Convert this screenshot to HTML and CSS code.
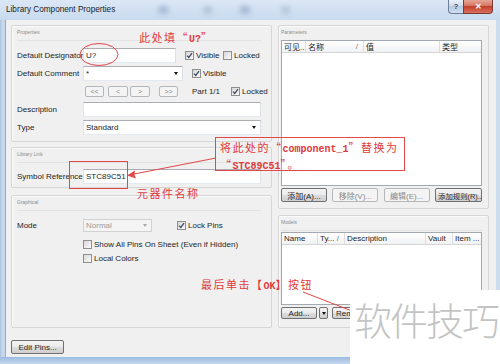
FILE: index.html
```html
<!DOCTYPE html>
<html lang="en">
<head>
  <meta charset="UTF-8">
  <title>Library Component Properties</title>
  <link rel="stylesheet" href="styles.css">
</head>
<body>
<div class="window">
  <div class="titlebar">
    <span class="title">Library Component Properties</span>
    <span class="title-blur"></span>
    <div class="caption">
      <span class="cap-btn cap-help">?</span>
      <span class="cap-btn cap-close">✕</span>
    </div>
  </div>

  <div class="client">
    <div class="columns">
      <div class="col col-left">
        <div class="group g-props">
          <div class="group-title">Properties</div>
          <div class="rows">
            <div class="row">
              <span class="lbl">Default Designator</span>
              <span class="edit w-short">U?</span>
              <span class="chk-cell"><span class="chk on"><svg viewBox="0 0 7 7"><path d="M1 3.6 L2.8 5.4 L6 1.2"/></svg></span>Visible</span>
              <span class="chk-cell"><span class="chk"></span>Locked</span>
            </div>
            <div class="row">
              <span class="lbl">Default Comment</span>
              <span class="edit combo w-short">*<span class="arrow"></span></span>
              <span class="chk-cell"><span class="chk on"><svg viewBox="0 0 7 7"><path d="M1 3.6 L2.8 5.4 L6 1.2"/></svg></span>Visible</span>
            </div>
            <div class="row">
              <span class="lbl"></span>
              <div class="nav">
                <span class="btn disabled nav-a">&lt;&lt;</span>
                <span class="btn disabled nav-b">&lt;</span>
                <span class="btn disabled nav-c">&gt;</span>
                <span class="btn disabled nav-d">&gt;&gt;</span>
              </div>
              <span class="part">Part 1/1</span>
              <span class="chk-cell"><span class="chk on"><svg viewBox="0 0 7 7"><path d="M1 3.6 L2.8 5.4 L6 1.2"/></svg></span>Locked</span>
            </div>
            <div class="row">
              <span class="lbl">Description</span>
              <span class="edit grow"></span>
            </div>
            <div class="row">
              <span class="lbl">Type</span>
              <span class="edit combo grow">Standard<span class="arrow"></span></span>
            </div>
          </div>
        </div>

        <div class="group g-link">
          <div class="group-title">Library Link</div>
          <div class="rows">
            <div class="row">
              <span class="lbl">Symbol Reference</span>
              <span class="edit grow">STC89C51</span>
            </div>
          </div>
        </div>

        <div class="group g-graph">
          <div class="group-title">Graphical</div>
          <div class="rows">
            <div class="row">
              <span class="lbl">Mode</span>
              <span class="edit combo off w-mode">Normal<span class="arrow"></span></span>
              <span class="chk-cell pins"><span class="chk on"><svg viewBox="0 0 7 7"><path d="M1 3.6 L2.8 5.4 L6 1.2"/></svg></span>Lock Pins</span>
            </div>
            <div class="row small first">
              <span class="lbl"></span>
              <span class="chk-cell"><span class="chk"></span>Show All Pins On Sheet (Even if Hidden)</span>
            </div>
            <div class="row small">
              <span class="lbl"></span>
              <span class="chk-cell"><span class="chk"></span>Local Colors</span>
            </div>
          </div>
        </div>
      </div>

      <div class="col col-right">
        <div class="group g-params">
          <div class="group-title">Parameters</div>
          <div class="table t-params">
            <div class="thead">
              <span class="th p-vis">可见...</span>
              <span class="th p-name">名称<span>/</span></span>
              <span class="th p-val">值</span>
              <span class="th p-type">类型</span>
            </div>
            <div class="tbody"></div>
          </div>
          <div class="btn-row">
            <span class="btn">添加(A)...</span>
            <span class="btn disabled">移除(V)...</span>
            <span class="btn disabled">编辑(E)...</span>
            <span class="btn b-rule">添加规则(R)..</span>
          </div>
        </div>

        <div class="group g-models">
          <div class="group-title">Models</div>
          <div class="table t-models">
            <div class="thead">
              <span class="th m-name">Name</span>
              <span class="th m-type">Ty...<span>/</span></span>
              <span class="th m-desc">Description</span>
              <span class="th m-vault">Vault</span>
              <span class="th m-item">Item ...</span>
            </div>
            <div class="tbody"></div>
          </div>
          <div class="btn-row models-btns">
            <span class="btn b-add">Add...</span>
            <span class="btn b-drop"><span class="arrow"></span></span>
            <span class="btn b-remove">Remove...</span>
          </div>
        </div>
      </div>
    </div>

    <div class="footer">
      <span class="btn b-pins">Edit Pins...</span>
    </div>
  </div>
  <div class="frame-bottom"></div>

  <!-- red notes drawn over the dialog -->
  <svg class="marks" viewBox="0 0 500 364">
    <ellipse cx="99" cy="54.5" rx="19" ry="11"/>
    <rect x="69.5" y="161.5" width="58" height="27"/>
    <rect x="215.5" y="137.5" width="189" height="33"/>
    <line x1="129" y1="175" x2="216" y2="158"/>
    <path class="head" d="M127 175.5 L135 170.5 L134.5 175 L136 178.5 Z"/>
    <line x1="303" y1="292" x2="352" y2="311"/>
  </svg>
  <div class="note note-u" lang="zh-CN">此处填“<span class="mono">U?</span>”</div>
  <div class="note note-box" lang="zh-CN">
    <div>将此处的“<span class="mono">component_1</span>”替换为</div>
    <div>“<span class="mono">STC89C51</span>”。</div>
  </div>
  <div class="note note-name" lang="zh-CN">元器件名称</div>
  <div class="note note-ok" lang="zh-CN">最后单击【<span class="mono">OK</span>】按钮</div>

  <div class="watermark" lang="zh-CN">软件技巧</div>
</div>
</body>
</html>
```

FILE: styles.css
```css
* {
  box-sizing: border-box;
}

body {
  margin: 0;
  font-family: "Liberation Sans", "Noto Sans CJK SC", sans-serif;
  font-size: 8px;
  color: #1e1e1e;
  background: #fff;
}

.window {
  position: relative;
  width: 500px;
  height: 364px;
  overflow: hidden;
  display: flex;
  flex-direction: column;
  background: linear-gradient(90deg, #a9bfd9 0, #c6d8ee 2px, #cddcef 100%);
}

/* title bar */
.titlebar {
  height: 20px;
  flex: none;
  display: flex;
  align-items: flex-start;
  padding-left: 6px;
  background: linear-gradient(#dbe7f5, #c8daef);
}

.title {
  font-size: 8.2px;
  line-height: 20px;
  color: #1b1b1b;
}

.title-blur {
  width: 170px;
  height: 10px;
  margin: 5px 0 0 28px;
  background:
    radial-gradient(circle at 12% 50%, #8ea6c4 0, transparent 8px),
    radial-gradient(circle at 38% 50%, #9bb0ca 0, transparent 7px),
    radial-gradient(circle at 60% 50%, #8aa3c2 0, transparent 8px),
    radial-gradient(circle at 84% 50%, #a2b6cf 0, transparent 7px);
  filter: blur(2px);
  opacity: 0.8;
}

.caption {
  margin-left: auto;
  margin-right: 7px;
  display: flex;
}

.cap-btn {
  height: 14px;
  display: flex;
  align-items: center;
  justify-content: center;
  border: 1px solid #6d7f96;
  border-top: none;
  font-size: 8px;
  font-weight: bold;
}

.cap-help {
  width: 15px;
  border-radius: 0 0 0 4px;
  border-right: none;
  color: #3c4f6b;
  background: linear-gradient(#e9f0f8, #cad8ea 50%, #b8cbe2 50%, #cfdef0);
}

.cap-close {
  width: 30px;
  border-radius: 0 0 4px 0;
  border-color: #7a3b33;
  color: #fff;
  background: linear-gradient(#e8a597, #d26f5f 50%, #c4402c 50%, #d9705c);
}

/* dialog body */
.client {
  flex: 1;
  margin: 0 4px 0 5px;
  border-left: 1px solid #97abc3;
  background: #f0f0f0;
  display: flex;
  flex-direction: column;
}

.columns {
  height: 308px;
  padding: 5px 7px 0 5px;
  display: flex;
  gap: 6px;
}

.col {
  display: flex;
  flex-direction: column;
}

.col-left {
  width: 261px;
}

.col-right {
  width: 211px;
}

.group {
  border: 1px solid #d6d6d6;
  border-radius: 2px;
  background: #f0f0f0;
  box-shadow: inset 1px 1px 0 #fafafa;
  padding: 0 10px 0 5px;
}

.group-title {
  height: 15px;
  padding-top: 4px;
  font-size: 5px;
  line-height: 5px;
  color: #8c8c8c;
  border-bottom: 1px solid #e2e2e2;
}

.g-props {
  height: 117px;
}

.g-link {
  height: 41px;
  margin-top: 5px;
}

.g-graph {
  flex: 1;
  margin-top: 7px;
}

.g-props .rows,
.g-graph .rows {
  margin-top: 5px;
}

.g-link .rows {
  margin-top: 4px;
}

.row {
  height: 18px;
  display: flex;
  align-items: center;
}

.row.small {
  height: 14px;
}

.row.first {
  margin-top: 3px;
}

.lbl {
  width: 66px;
  flex: none;
  white-space: nowrap;
}

.edit {
  height: 15px;
  display: flex;
  align-items: center;
  padding-left: 2px;
  background: #fff;
  border: 1px solid;
  border-color: #abadb3 #dbdfe6 #e3e9ef #e2e3ea;
}

.w-short {
  width: 100px;
}

.w-mode {
  width: 69px;
  height: 13px;
}

.grow {
  flex: 1;
}

.combo .arrow {
  margin: 0 4px 0 auto;
}

.arrow {
  width: 0;
  height: 0;
  border: 2.5px solid transparent;
  border-top: 3px solid #111;
  border-bottom: none;
}

.combo.off {
  color: #9a9a9a;
  background: #f4f4f4;
  border-color: #d2d2d2;
}

.combo.off .arrow {
  border-top-color: #a8a8a8;
}

.chk-cell {
  width: 38px;
  flex: none;
  display: flex;
  align-items: center;
  gap: 2px;
  white-space: nowrap;
}

.row > .edit + .chk-cell {
  margin-left: 9px;
}

.chk-cell.pins {
  margin-left: 25px !important;
}

.chk {
  width: 9px;
  height: 9px;
  flex: none;
  display: flex;
  align-items: center;
  justify-content: center;
  border: 1px solid #8f8f8f;
  background: linear-gradient(135deg, #d8d8d8, #fbfbfb);
}

.chk svg {
  width: 7px;
  height: 7px;
}

.chk path {
  fill: none;
  stroke: #3d4a67;
  stroke-width: 1.3;
}

.nav {
  width: 109px;
  flex: none;
  display: flex;
  padding-left: 2px;
}

.nav .btn {
  height: 11px;
  font-size: 7px;
}

.nav-a { width: 19px; }
.nav-b { width: 20px; margin-left: 4px; }
.nav-c { width: 20px; margin-left: 2px; }
.nav-d { width: 19px; margin-left: 9px; }

.part {
  width: 39px;
  flex: none;
}

/* buttons */
.btn {
  height: 14px;
  display: flex;
  align-items: center;
  justify-content: center;
  white-space: nowrap;
  overflow: hidden;
  border: 1px solid #707070;
  border-radius: 2px;
  background: linear-gradient(#f4f4f4, #ebebeb 50%, #dddddd 50%, #cfcfcf);
}

.btn.disabled {
  color: #8a8a8a;
  border-color: #b4b8bb;
  background: #f4f4f4;
}

/* list views */
.g-params,
.g-models {
  padding: 0 6px 0 2px;
}

.g-params {
  height: 184px;
}

.g-models {
  flex: 1;
  margin-top: 6px;
}

.table {
  border: 1px solid #a3a9b1;
  background: #fff;
  display: flex;
  flex-direction: column;
}

.t-params {
  height: 146px;
  margin-top: -1px;
}

.t-models {
  height: 73px;
  margin-top: 1px;
}

.thead {
  height: 12px;
  flex: none;
  display: flex;
  background: linear-gradient(#ffffff, #f1f2f4);
  border-bottom: 1px solid #d5d5d5;
}

.th {
  display: flex;
  align-items: center;
  justify-content: space-between;
  padding: 0 5px 0 2px;
  border-right: 1px solid #dedede;
  white-space: nowrap;
  overflow: hidden;
}

.th span {
  color: #777;
}

.p-vis { width: 24px; padding-right: 0; }
.p-name { width: 58px; }
.p-val { width: 76px; }
.p-type { flex: 1; border-right: none; }

.m-name { width: 36px; }
.m-type { width: 27px; }
.m-desc { width: 81px; }
.m-vault { width: 27px; }
.m-item { flex: 1; border-right: none; }

.btn-row {
  margin-top: 2px;
  display: flex;
  justify-content: space-between;
}

.g-params .btn-row .btn {
  width: 46px;
}

.g-params .btn-row .b-rule {
  width: 47px;
  font-size: 7.4px;
  justify-content: flex-start;
  padding-left: 2px;
}

.models-btns {
  justify-content: flex-start;
}

.models-btns .btn {
  height: 12px;
}

.b-add { width: 36px; }
.b-drop { width: 9px; margin-left: 2px; }
.b-remove { width: 46px; margin-left: 4px; justify-content: flex-start; padding-left: 3px; }

.footer {
  flex: 1;
  padding: 12px 0 0 5px;
}

.b-pins {
  width: 53px;
}

.frame-bottom {
  height: 7px;
  flex: none;
  background: linear-gradient(#9bbbe0, #c5d9ef);
}

/* annotations */
.marks {
  position: absolute;
  left: 0;
  top: 0;
  width: 500px;
  height: 364px;
}

.marks ellipse,
.marks rect,
.marks line {
  fill: none;
  stroke: #e0484a;
  stroke-width: 1;
}

.marks .head {
  fill: #e0484a;
}

.note {
  position: absolute;
  font-family: "Noto Sans CJK SC", sans-serif;
  font-size: 11px;
  line-height: 14px;
  letter-spacing: 1.5px;
  color: #e23a3c;
  font-feature-settings: "fwid";
  white-space: nowrap;
}

.note .mono {
  font-family: "Liberation Mono", monospace;
  font-size: 10px;
  font-weight: bold;
  letter-spacing: 0;
  font-feature-settings: normal;
}

.note-u {
  left: 139px;
  top: 30px;
}

.note-box {
  left: 220px;
  top: 140px;
}

.note-name {
  left: 137px;
  top: 186px;
}

.note-ok {
  left: 201px;
  top: 277px;
}

.watermark {
  position: absolute;
  left: 350px;
  top: 290px;
  width: 150px;
  height: 74px;
  padding: 9px 0 0 4px;
  background: #fff;
  clip-path: polygon(129px 0, 150px 0, 150px 74px, 0 74px, 0 12px, 129px 12px);
  font-family: "Noto Sans CJK SC", sans-serif;
  font-size: 38px;
  font-weight: 300;
  line-height: 40px;
  letter-spacing: -2px;
  color: #c4c4c4;
  white-space: nowrap;
}
```
